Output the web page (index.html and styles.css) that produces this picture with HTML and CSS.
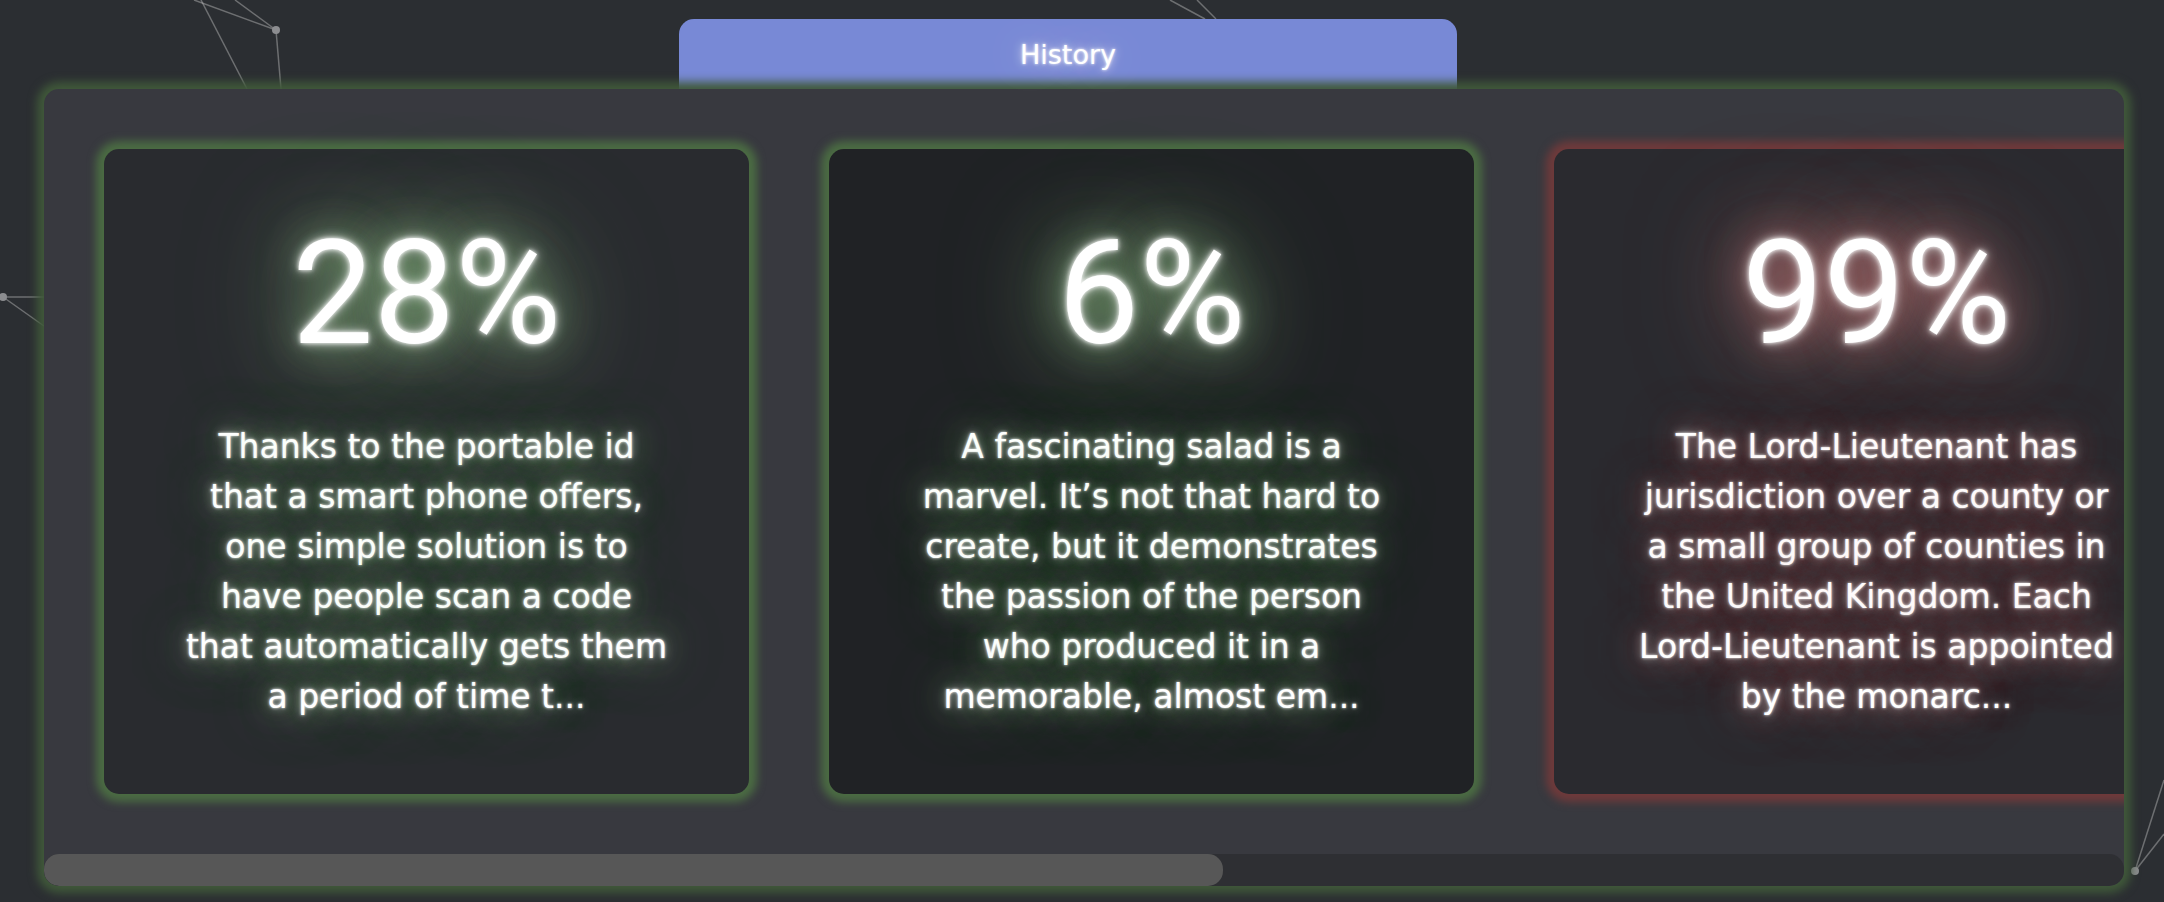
FILE: index.html
```html
<!DOCTYPE html>
<html lang="en">
<head>
  <meta charset="UTF-8">
  <title>History</title>
  <link rel="stylesheet" href="styles.css">
</head>
<body>
  <!-- particle network behind everything -->
  <svg class="network" width="2164" height="902" viewBox="0 0 2164 902">
    <g class="links">
      <line x1="194" y1="0" x2="276" y2="30"/>
      <line x1="235" y1="0" x2="276" y2="30"/>
      <line x1="201" y1="0" x2="247" y2="89"/>
      <line x1="276" y1="30" x2="281" y2="89"/>
      <line x1="3" y1="297" x2="44" y2="297"/>
      <line x1="3" y1="297" x2="44" y2="326"/>
      <line x1="1170" y1="0" x2="1205" y2="19"/>
      <line x1="1197" y1="0" x2="1216" y2="19"/>
      <line x1="2135" y1="871" x2="2164" y2="780"/>
      <line x1="2135" y1="871" x2="2164" y2="834"/>
    </g>
    <g class="nodes">
      <circle cx="276" cy="30" r="4"/>
      <circle cx="3" cy="297" r="4"/>
      <circle cx="2135" cy="871" r="4"/>
    </g>
  </svg>

  <main class="history">
    <div class="tab">History</div>
    <section class="slider">
      <div class="cards">
        <div class="card green">
          <div class="stat">28%</div>
          <p class="desc">Thanks to the portable id that a smart phone offers, one simple solution is to have people scan a code that automatically gets them a period of time t...</p>
        </div>
        <div class="card green selected">
          <div class="stat">6%</div>
          <p class="desc">A fascinating salad is a marvel. It’s not that hard to create, but it demonstrates the passion of the person who produced it in a memorable, almost em...</p>
        </div>
        <div class="card red">
          <div class="stat">99%</div>
          <p class="desc">The Lord-Lieutenant has jurisdiction over a county or a small group of counties in the United Kingdom. Each Lord-Lieutenant is appointed by the monarc...</p>
        </div>
        <div class="card green">
          <div class="stat">41%</div>
          <p class="desc">Most city gardens are planted on rooftops, where the soil is thin and the wind is strong, so growers pick hardy herbs that survive a dry summ...</p>
        </div>
        <div class="card red">
          <div class="stat">73%</div>
          <p class="desc">The old railway line was closed in the sixties, and the tracks were lifted soon after, leaving a long green path that walkers now use every wee...</p>
        </div>
      </div>
      <!-- scroll position: 5 cards, first three in view -->
      <div class="scrollbar">
        <div class="thumb" style="width: 56.7%"></div>
      </div>
    </section>
  </main>
</body>
</html>
```

FILE: styles.css
```css
body {
  margin: 0;
  height: 902px;
  overflow: hidden;
  background: #2b2e32;
  color: #fff;
  font-family: "DejaVu Sans", sans-serif;
}
.network {
  position: absolute;
  top: 0;
  left: 0;
}
.network line {
  stroke: rgba(190, 190, 190, 0.45);
  stroke-width: 1.5;
}
.network circle {
  fill: #8c8d90;
}
.history {
  position: relative;
  padding: 19px 40px 0 44px;
}
.tab {
  width: 778px;
  height: 70px;
  margin-left: 635px;
  display: flex;
  align-items: center;
  justify-content: center;
  background: #7889d6;
  border-radius: 15px 15px 0 0;
  font-size: 27px;
  text-shadow: 0 0 3px #fff, 0 0 10px rgba(255, 255, 255, 0.8), 0 0 40px rgba(255, 255, 255, 0.5);
}
.slider {
  background: #38393f;
  border-radius: 15px;
  box-shadow: 0 0 10px 7px #40593a;
  overflow: hidden;
}
.cards {
  display: flex;
  gap: 80px;
  padding: 60px;
  overflow: hidden;
}
.scrollbar {
  height: 32px;
  background: #2e2f33;
  border-radius: 15px;
}
.thumb {
  height: 100%;
  background: #575757;
  border-radius: 15px;
}
.card {
  flex: 0 0 645px;
  height: 645px;
  box-sizing: border-box;
  padding: 0 80px;
  display: flex;
  flex-direction: column;
  align-items: center;
  justify-content: center;
  text-align: center;
  background: #292b2f;
  border-radius: 15px;
}
.card.selected {
  background: #202225;
}
.card.green {
  box-shadow: 0 0 8px 8px #4b6c43;
  --glow: rgba(150, 200, 140, 0.75);
}
.card.red {
  background: #2a2a2f;
  box-shadow: 0 0 8px 8px #6f3a3b;
  --glow: rgba(210, 130, 130, 0.75);
}
.stat {
  font-family: Roboto, "Liberation Sans", sans-serif;
  font-size: 145px;
  line-height: 1;
  text-shadow: 0 0 4px #fff, 0 0 12px rgba(255, 255, 255, 0.8), 0 0 40px var(--glow), 0 0 80px var(--glow), 0 0 120px var(--glow);
}
.desc {
  margin: 56px 0 0;
  font-size: 33px;
  line-height: 50px;
  text-shadow: 0 0 3px #fff, 0 0 10px rgba(255, 255, 255, 0.6), 0 0 30px var(--glow), 0 0 60px var(--glow);
}
```
